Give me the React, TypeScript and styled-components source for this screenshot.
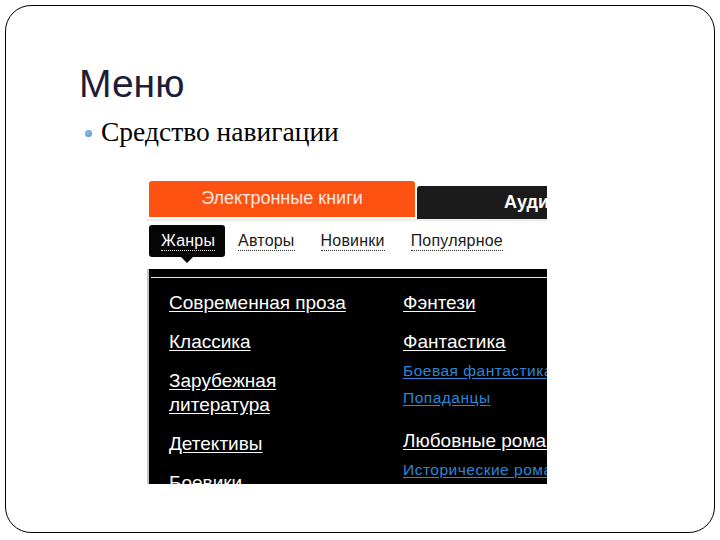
import styled, { createGlobalStyle } from "styled-components";

const GlobalStyle = createGlobalStyle`
  html, body {
    margin: 0;
    padding: 0;
    background: #ffffff;
  }
`;

const Slide = styled.div`
  box-sizing: border-box;
  margin: 5px;
  width: 710px;
  height: 528px;
  border: 1.5px solid #000;
  border-radius: 26px;
  display: flex;
  flex-direction: column;
  overflow: hidden;
`;

const Title = styled.h1`
  margin: 56px 0 0 73px;
  font-family: "Liberation Sans", Arial, sans-serif;
  font-weight: 400;
  font-size: 39px;
  line-height: 44px;
  color: #1d1d38;
`;

const BulletRow = styled.div`
  display: flex;
  align-items: center;
  gap: 9px;
  margin: 11px 0 0 79px;
  font-family: "Liberation Serif", "Times New Roman", serif;
  font-size: 27.5px;
  line-height: 30px;
  color: #000;
`;

const Dot = styled.span`
  width: 7px;
  height: 7px;
  border-radius: 50%;
  background: radial-gradient(circle at 40% 40%, #8cc0e6, #4a8cc4);
  margin-top: 2px;
`;

const Shot = styled.div`
  margin: 33px 0 0 141px;
  width: 400px;
  height: 304px;
  overflow: hidden;
  display: flex;
  flex-direction: column;
  font-family: "Liberation Sans", Arial, sans-serif;
  background: #fff;
`;

const TabsRow = styled.div`
  display: flex;
  align-items: flex-start;
  gap: 2px;
  padding: 1px 0 0 2px;
  height: 41px;
  border-bottom: 2px solid #ececec;
  box-sizing: border-box;
  flex: none;
`;

const Tab = styled.div<{ $active?: boolean }>`
  flex: none;
  box-sizing: border-box;
  height: ${(p) => (p.$active ? 36 : 33)}px;
  margin-top: ${(p) => (p.$active ? 0 : 5)}px;
  width: ${(p) => (p.$active ? 266 : 150)}px;
  border-radius: 3px 3px 0 0;
  background: ${(p) => (p.$active ? "#fe5212" : "#1b1b1b")};
  color: ${(p) => (p.$active ? "#ffe9e0" : "#fff")};
  font-size: 18px;
  font-weight: ${(p) => (p.$active ? 400 : 700)};
  display: flex;
  align-items: center;
  justify-content: ${(p) => (p.$active ? "center" : "flex-start")};
  padding-left: ${(p) => (p.$active ? 0 : 87)}px;
  padding-bottom: ${(p) => (p.$active ? 1 : 0)}px;
  white-space: nowrap;
`;

const SubNav = styled.div`
  display: flex;
  align-items: flex-start;
  height: 48px;
  box-sizing: border-box;
  padding: 4px 0 0 2px;
  flex: none;
`;

const SubItem = styled.div<{ $active?: boolean }>`
  position: relative;
  box-sizing: border-box;
  height: 32px;
  padding: ${(p) => (p.$active ? "0 10px 0 12px" : "0")};
  margin-right: ${(p) => (p.$active ? 13 : 26)}px;
  display: flex;
  align-items: center;
  border-radius: 3px;
  background: ${(p) => (p.$active ? "#050505" : "transparent")};
  color: ${(p) => (p.$active ? "#fff" : "#1a1a1a")};
  font-size: 16px;
  letter-spacing: 0.2px;

  span {
    border-bottom: 1px dotted ${(p) => (p.$active ? "#ddd" : "#333")};
    line-height: 18px;
  }

  ${(p) =>
    p.$active &&
    `
    &::after {
      content: "";
      position: absolute;
      left: 50%;
      margin-left: -6px;
      bottom: -6px;
      border-left: 6px solid transparent;
      border-right: 6px solid transparent;
      border-top: 6px solid #050505;
    }
  `}
`;

const Panel = styled.div`
  flex: 1;
  background: #000;
  border-left: 2px solid #c4c4c4;
  display: flex;
  flex-direction: column;
`;

const TopLine = styled.div`
  height: 1px;
  margin: 8px 0 0 2px;
  background: #e6e6e6;
`;

const Columns = styled.div`
  display: grid;
  grid-template-columns: 234px 1fr;
  padding: 13px 0 0 20px;
  white-space: nowrap;
`;

const Column = styled.div`
  display: flex;
  flex-direction: column;
`;

const Group = styled.div<{ $hasSubs?: boolean }>`
  display: flex;
  flex-direction: column;
  margin-bottom: ${(p) => (p.$hasSubs ? 18 : 15)}px;
`;

const Heading = styled.a<{ $wrapped?: boolean }>`
  color: #fff;
  font-size: 19px;
  line-height: 24px;
  text-decoration: underline;
  text-underline-offset: 2px;
  align-self: flex-start;
`;

const SubLinks = styled.div`
  display: flex;
  flex-direction: column;
  margin-top: 3px;
`;

const SubLink = styled.a`
  color: #2a86d6;
  font-size: 15.5px;
  line-height: 27px;
  letter-spacing: 0.5px;
  text-decoration: underline;
  text-underline-offset: 2px;
  align-self: flex-start;
`;

const left: string[][] = [
  ["Современная проза"],
  ["Классика"],
  ["Зарубежная", "литература"],
  ["Детективы"],
  ["Боевики"],
];

const right: { head: string; subs: string[] }[] = [
  { head: "Фэнтези", subs: [] },
  { head: "Фантастика", subs: ["Боевая фантастика", "Попаданцы"] },
  { head: "Любовные романы", subs: ["Исторические романы"] },
];

export default function App() {
  return (
    <>
      <GlobalStyle />
      <Slide>
        <Title>Меню</Title>
        <BulletRow>
          <Dot />
          Средство навигации
        </BulletRow>
        <Shot>
          <TabsRow>
            <Tab $active>Электронные книги</Tab>
            <Tab>Аудиокниги</Tab>
          </TabsRow>
          <SubNav>
            <SubItem $active>
              <span>Жанры</span>
            </SubItem>
            <SubItem>
              <span>Авторы</span>
            </SubItem>
            <SubItem>
              <span>Новинки</span>
            </SubItem>
            <SubItem>
              <span>Популярное</span>
            </SubItem>
          </SubNav>
          <Panel>
            <TopLine />
            <Columns>
              <Column>
                {left.map((lines) => (
                  <Group key={lines[0]}>
                    {lines.map((l) => (
                      <Heading key={l}>{l}</Heading>
                    ))}
                  </Group>
                ))}
              </Column>
              <Column>
                {right.map((g) => (
                  <Group key={g.head} $hasSubs={g.subs.length > 0}>
                    <Heading>{g.head}</Heading>
                    {g.subs.length > 0 && (
                      <SubLinks>
                        {g.subs.map((s) => (
                          <SubLink key={s}>{s}</SubLink>
                        ))}
                      </SubLinks>
                    )}
                  </Group>
                ))}
              </Column>
            </Columns>
          </Panel>
        </Shot>
      </Slide>
    </>
  );
}
